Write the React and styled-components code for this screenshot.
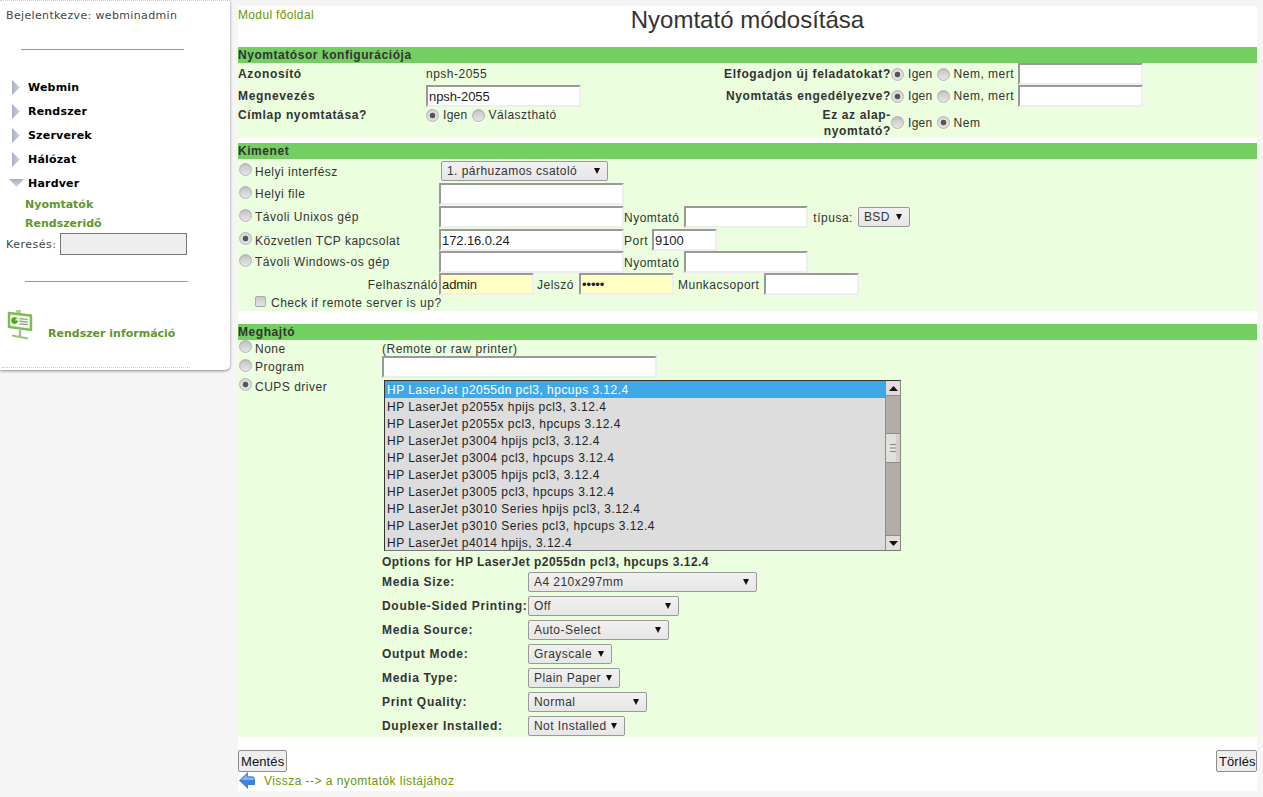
import React from "react";
import styled, { createGlobalStyle } from "styled-components";

const Global = createGlobalStyle`
  * { box-sizing: border-box; }
  html, body { margin: 0; padding: 0; height: 100%; overflow: hidden; background: #f5f5f5; }
  body { font-family: "Liberation Sans", Arial, sans-serif; font-size: 12px; color: #333; letter-spacing: .5px; }
`;

const Page = styled.div`display: flex; align-items: flex-start; height: 797px;`;

const Sidebar = styled.aside`
  width: 230px; height: 370px; flex: none; background: #fff; border-radius: 0 0 5px 0;
  border-top: 1px dotted #ccc; box-shadow: 0 1px 3px rgba(0,0,0,.45);
  font-family: "DejaVu Sans", sans-serif; font-size: 11px; color: #444; display: flex; flex-direction: column;
`;
const LoggedIn = styled.div`margin: 8px 0 0 6px; height: 14px; line-height: 14px; letter-spacing: .35px;`;
const Rule = styled.hr`
  height: 1px; border: 0; background: #999; margin: ${p => p.$top}px 0 0 ${p => p.$left}px; width: 163px; flex: none;
`;
const Menu = styled.nav`margin-top: 25px; display: flex; flex-direction: column;`;
const MenuRow = styled.div`
  height: 24px; display: flex; align-items: center; padding-left: ${p => p.$open ? 9 : 12}px;
  gap: ${p => p.$open ? 4 : 8}px; font-weight: bold; font-size: 11px; color: #000; letter-spacing: .2px;
`;
const SubItem = styled.div`
  height: 19px; line-height: 19px; margin-left: 25px; color: #5f962c; font-weight: bold; letter-spacing: 0;
`;
const SearchRow = styled.div`display: flex; align-items: center; margin: -1px 0 0 6px; height: 24px; gap: 4px; letter-spacing: .5px;`;
const SearchBox = styled.input`
  width: 127px; height: 22px; background: #eee; border: 1px solid #777; padding: 0;
`;
const InfoRow = styled.div`display: flex; align-items: flex-start; margin: 28px 0 0 7px; gap: 15px; height: 30px;`;
const InfoLink = styled.span`color: #5f962c; font-weight: bold; letter-spacing: 0; margin-top: 17px; line-height: 14px;`;
const DottedEdge = styled.div`margin: auto 0 2px 2px; width: 188px; border-bottom: 1px dotted #ccc;`;

const Main = styled.main`
  margin: 6px 0 0 8px; width: 1019px; height: 785px; background: #fff; display: flex; flex-direction: column;
`;
const TitleBar = styled.header`display: grid; grid-template-columns: 1fr auto 1fr; height: 41px;`;
const Link = styled.a`color: #669900; text-decoration: none; letter-spacing: ${p => p.$sp ?? .35}px;`;
const ModuleLink = styled(Link)`line-height: 16px; margin-top: 1px;`;
const Title = styled.h1`margin: 0; font-size: 24px; font-weight: normal; line-height: 27px; letter-spacing: 0; color: #333;`;

const Section = styled.section`margin-bottom: ${p => p.$mb ?? 0}px;`;
const SectionHead = styled.h2`
  margin: 0; height: 16px; line-height: 17px; background: #74cf62; font-size: 12px; font-weight: bold; color: #333;
  letter-spacing: .55px;
`;
const SectionBody = styled.div`background: #ebfedd; height: ${p => p.$h}px;`;

const Grid1 = styled.div`
  display: grid; grid-template-columns: 188px 277px 188px 1fr; grid-template-rows: 22px 22px 31px; align-items: center;
`;
const Strong = styled.b`font-weight: bold; letter-spacing: .65px;`;
const TopStrong = styled(Strong)`align-self: start; line-height: 16px;`;
const RightLabel = styled(Strong)`text-align: right; line-height: 16px;`;
const Choice = styled.div`
  display: flex; align-items: center; gap: 4px; height: 100%;
  ${p => p.$top && "align-self: start; height: 16px;"}
`;
const Short = styled.span`letter-spacing: .3px;`;

const Radio = styled.input.attrs({ type: "radio", readOnly: true })`
  appearance: none; margin: 0; width: 13px; height: 13px; border-radius: 50%; flex: none;
  border: 1px solid #b5b5b5;
  background: ${p => p.checked
    ? "radial-gradient(circle, #555 0 2.6px, #e3e3e3 3.2px, #d6d6d6 100%)"
    : "linear-gradient(#c4c4c4, #e6e6e6)"};
  box-shadow: inset 0 1px 1px rgba(0,0,0,.08), 0 1px 0 rgba(255,255,255,.7);
`;
const Check = styled.input.attrs({ type: "checkbox", readOnly: true })`
  appearance: none; margin: 1px 0 0; width: 11px; height: 11px; border: 1px solid #aaa; border-radius: 2px; flex: none;
  background: linear-gradient(#c9c9c9, #e4e4e4);
`;

const Field = styled.input.attrs({ type: "text", readOnly: true })`
  width: ${p => p.$w}px; height: 22px; flex: none; margin: 0; padding: 1px 1px;
  border: 2px solid; border-color: #999 #eee #eee #999;
  background: ${p => p.$yellow ? "#ffffc4" : "#fff"};
  font: 13px "Liberation Sans", Arial, sans-serif; color: #222; letter-spacing: -.1px; outline: none;
`;
const Dots = styled(Field).attrs({ type: "password" })``;

const SelectBox = styled.div`
  width: ${p => p.$w}px; height: 20px; flex: none; display: flex; align-items: center; justify-content: space-between;
  padding: 0 7px 0 5px; border: 1px solid #999; border-radius: 2px; background: linear-gradient(#f1f1f1, #e6e6e6);
  color: #333; letter-spacing: .45px; white-space: nowrap;
`;
const Arrow = () => (
  <svg width="6" height="6" viewBox="0 0 6 6"><path d="M0 0h6L3 6z" fill="#111" /></svg>
);
const Select = ({ w, children }) => (
  <SelectBox $w={w}><span>{children}</span><Arrow /></SelectBox>
);

const OutputRow = styled.div`display: flex; align-items: flex-start; height: ${p => p.$h}px;`;
const RadioCell = styled.label`
  width: ${p => p.$w ?? 201}px; flex: none; display: flex; align-items: flex-start; gap: 3px; padding-left: 1px; line-height: 16px;
  & > input { margin-top: ${p => p.$r ?? 3}px; }
  & > span { margin-top: ${p => p.$t ?? 3}px; }
`;
const Text = styled.span`
  flex: none; height: 22px; line-height: 24px; margin-left: ${p => p.$ml ?? 0}px; margin-right: ${p => p.$mr ?? 0}px;
`;
const Hint = styled.span`line-height: 16px; margin-top: 1px; height: 15px;`;
const SelectWrap = styled.div`padding: ${p => p.$t ?? 2}px 0 0 ${p => p.$l ?? 0}px;`;
const UserLabel = styled(Text)`width: 201px; text-align: right; padding-right: 1px;`;
const CheckRow = styled.label`display: flex; align-items: flex-start; gap: 5px; height: 16px; padding-left: 17px; line-height: 16px;`;

const DriverRow = styled.div`display: flex; align-items: flex-start; height: ${p => p.$h}px;`;
const ListBox = styled.div`
  margin: 2px 0 0 2px; width: 517px; height: 171px; display: flex; border: 1px solid; border-color: #333 #888 #777 #333;
  background: #ddd; font-size: 12px; letter-spacing: .47px;
`;
const ListItems = styled.ul`margin: 0; padding: 0; list-style: none; flex: 1; min-width: 0;`;
const ListItem = styled.li`
  height: 17px; line-height: 17px; padding: 1px 0 0 2px; white-space: nowrap;
  background: ${p => p.$sel ? "#3fa9e8" : "transparent"}; color: ${p => p.$sel ? "#fff" : "#222"};
`;
const ScrollBar = styled.div`
  width: 15px; flex: none; background: #b3aca7; display: flex; flex-direction: column; border-left: 1px solid #8c8c8c;
`;
const ScrollBtn = styled.div`
  height: 15px; flex: none; background: #e2ddd8; display: flex; align-items: center; justify-content: center;
  border-top: ${p => p.$down ? "1px solid #8c8c8c" : 0}; border-bottom: ${p => p.$down ? 0 : "1px solid #8c8c8c"};
`;
const ScrollGap = styled.div`flex: ${p => p.$f}; `;
const Thumb = styled.div`
  height: 30px; flex: none; background: linear-gradient(90deg, #e2e0dc 0 70%, #d2cfca 70%);
  border-top: 1px solid #8c8c8c; border-bottom: 1px solid #8c8c8c; display: flex; align-items: center; justify-content: center;
`;
const OptionsTitle = styled.b`display: block; height: 18px; line-height: 20px; margin-left: 144px; letter-spacing: .48px;`;
const OptionRow = styled.div`
  display: grid; grid-template-columns: 146px auto; justify-content: start; align-items: center; height: 24px; margin-left: 144px;
  & > b { letter-spacing: .7px; white-space: nowrap; }
`;
const Bottom = styled.div`display: flex; justify-content: space-between; margin-top: 13px; height: 22px;`;
const Btn = styled.button`
  height: 22px; padding: 0 2px; width: ${p => p.$w}px; background: #eee; border: 1px solid #8e8e8e; border-radius: 2px;
  font: 13px "Liberation Sans", Arial, sans-serif; color: #111; letter-spacing: .1px;
`;
const BackRow = styled.div`display: flex; align-items: center; gap: 9px; height: 17px; padding-left: 1px;`;

const drivers = [
  "HP LaserJet p2055dn pcl3, hpcups 3.12.4", "HP LaserJet p2055x hpijs pcl3, 3.12.4",
  "HP LaserJet p2055x pcl3, hpcups 3.12.4", "HP LaserJet p3004 hpijs pcl3, 3.12.4",
  "HP LaserJet p3004 pcl3, hpcups 3.12.4", "HP LaserJet p3005 hpijs pcl3, 3.12.4",
  "HP LaserJet p3005 pcl3, hpcups 3.12.4", "HP LaserJet p3010 Series hpijs pcl3, 3.12.4",
  "HP LaserJet p3010 Series pcl3, hpcups 3.12.4", "HP LaserJet p4014 hpijs, 3.12.4",
];
const options = [
  ["Media Size:", "A4 210x297mm", 229], ["Double-Sided Printing:", "Off", 151], ["Media Source:", "Auto-Select", 141],
  ["Output Mode:", "Grayscale", 84], ["Media Type:", "Plain Paper", 92], ["Print Quality:", "Normal", 119],
  ["Duplexer Installed:", "Not Installed", 97],
];

const TriRight = () => (
  <svg width="8" height="15" viewBox="0 0 8 15"><defs><linearGradient id="tr" x1="0" x2="1" y1="0" y2="0"><stop offset="0" stopColor="#a9adc4" /><stop offset="1" stopColor="#d5d7e2" /></linearGradient></defs><path d="M0 0l8 7.5L0 15z" fill="url(#tr)" /></svg>
);
const TriDown = () => (
  <svg width="15" height="8" viewBox="0 0 15 8"><defs><linearGradient id="td" x1="0" x2="0" y1="0" y2="1"><stop offset="0" stopColor="#a9adc4" /><stop offset="1" stopColor="#d5d7e2" /></linearGradient></defs><path d="M0 0h15L7.5 8z" fill="url(#td)" /></svg>
);
const InfoIcon = () => (
  <svg width="26" height="30" viewBox="0 0 26 30">
    <path d="M9 0h5v3H9z" fill="#b9cfa2" />
    <path d="M2 3l22 2.5v14.5L2 17z" fill="#f2f7e6" stroke="#7cbb55" strokeWidth="2.4" />
    <circle cx="7.6" cy="10.6" r="3.3" fill="#4fa12a" />
    <path d="M7.6 10.6l3.3 0a3.3 3.3 0 0 0-1-2.4z" fill="#f2f7e6" />
    <path d="M12.5 8.6l8 .9M12.5 11.2l8 .9M12.5 13.8l8 .9" stroke="#8b9a85" strokeWidth="1.2" />
    <path d="M13 20v6" stroke="#a9bba0" strokeWidth="2.4" />
    <path d="M5 25.5l16 3" stroke="#9cc47a" strokeWidth="2" />
  </svg>
);
const BackIcon = () => (
  <svg width="16" height="17" viewBox="0 0 16 17">
    <path d="M0 8.5L9 0v4.2h3.5Q16 4.2 16 8v5h-7v4z" fill="#3c82dc" />
    <path d="M2 8L8 2.5v3h5.5Q15 5.5 15 8z" fill="#86b5ee" />
  </svg>
);

export default function App() {
  return (
    <>
      <Global />
      <Page>
        <Sidebar>
          <LoggedIn>Bejelentkezve: webminadmin</LoggedIn>
          <Rule $top={26} $left={21} />
          <Menu>
            {["Webmin", "Rendszer", "Szerverek", "Hálózat"].map(m => (
              <MenuRow key={m}><TriRight />{m}</MenuRow>
            ))}
            <MenuRow $open><TriDown />Hardver</MenuRow>
          </Menu>
          <SubItem>Nyomtatók</SubItem>
          <SubItem>Rendszeridő</SubItem>
          <SearchRow>Keresés: <SearchBox /></SearchRow>
          <Rule $top={25} $left={25} />
          <InfoRow><InfoIcon /><InfoLink>Rendszer információ</InfoLink></InfoRow>
          <DottedEdge />
        </Sidebar>
        <Main>
          <TitleBar>
            <ModuleLink>Modul főoldal</ModuleLink>
            <Title>Nyomtató módosítása</Title>
            <span />
          </TitleBar>

          <Section $mb={5}>
            <SectionHead>Nyomtatósor konfigurációja</SectionHead>
            <SectionBody $h={75}>
              <Grid1>
                <Strong>Azonosító</Strong>
                <span>npsh-2055</span>
                <RightLabel>Elfogadjon új feladatokat?</RightLabel>
                <Choice><Radio checked /><Short>Igen</Short><Radio />Nem, mert<Field $w={125} /></Choice>
                <Strong>Megnevezés</Strong>
                <Field $w={155} defaultValue="npsh-2055" />
                <RightLabel>Nyomtatás engedélyezve?</RightLabel>
                <Choice><Radio checked /><Short>Igen</Short><Radio />Nem, mert<Field $w={125} /></Choice>
                <TopStrong>Címlap nyomtatása?</TopStrong>
                <Choice $top><Radio checked /><Short>Igen</Short><Radio />Választható</Choice>
                <RightLabel>Ez az alap-<br />nyomtató?</RightLabel>
                <Choice><Radio /><Short>Igen</Short><Radio checked />Nem</Choice>
              </Grid1>
            </SectionBody>
          </Section>

          <Section $mb={13}>
            <SectionHead>Kimenet</SectionHead>
            <SectionBody $h={152}>
              <OutputRow $h={24}>
                <RadioCell $r={4} $t={5}><Radio /><span>Helyi interfész</span></RadioCell>
                <SelectWrap $l={2}><Select w={167}>1. párhuzamos csatoló</Select></SelectWrap>
              </OutputRow>
              <OutputRow $h={23}>
                <RadioCell><Radio /><span>Helyi file</span></RadioCell>
                <Field $w={185} />
              </OutputRow>
              <OutputRow $h={23}>
                <RadioCell><Radio /><span>Távoli Unixos gép</span></RadioCell>
                <Field $w={185} />
                <Text $mr={5}>Nyomtató</Text>
                <Field $w={124} />
                <Text $ml={5} $mr={5}>típusa:</Text>
                <SelectWrap $t={1}><Select w={52}>BSD</Select></SelectWrap>
              </OutputRow>
              <OutputRow $h={22}>
                <RadioCell $t={4}><Radio checked /><span>Közvetlen TCP kapcsolat</span></RadioCell>
                <Field $w={185} defaultValue="172.16.0.24" />
                <Text $mr={4}>Port</Text>
                <Field $w={65} defaultValue="9100" />
              </OutputRow>
              <OutputRow $h={22}>
                <RadioCell><Radio /><span>Távoli Windows-os gép</span></RadioCell>
                <Field $w={185} />
                <Text $mr={5}>Nyomtató</Text>
                <Field $w={124} />
              </OutputRow>
              <OutputRow $h={22}>
                <UserLabel>Felhasználó</UserLabel>
                <Field $w={95} $yellow defaultValue="admin" />
                <Text $ml={3} $mr={5}>Jelszó</Text>
                <Dots $w={95} $yellow defaultValue="admin" />
                <Text $ml={4} $mr={5}>Munkacsoport</Text>
                <Field $w={95} />
              </OutputRow>
              <CheckRow><Check /><span>Check if remote server is up?</span></CheckRow>
            </SectionBody>
          </Section>

          <Section>
            <SectionHead>Meghajtó</SectionHead>
            <SectionBody $h={397}>
              <DriverRow $h={16}>
                <RadioCell $w={144} $r={0} $t={1}><Radio /><span>None</span></RadioCell>
                <Hint>(Remote or raw printer)</Hint>
              </DriverRow>
              <DriverRow $h={22}>
                <RadioCell $w={144}><Radio /><span>Program</span></RadioCell>
                <Field $w={275} />
              </DriverRow>
              <DriverRow $h={174}>
                <RadioCell $w={144} $r={0} $t={1}><Radio checked /><span>CUPS driver</span></RadioCell>
                <ListBox>
                  <ListItems>
                    {drivers.map((d, i) => <ListItem key={d} $sel={i === 0}>{d}</ListItem>)}
                  </ListItems>
                  <ScrollBar>
                    <ScrollBtn><svg width="9" height="5" viewBox="0 0 9 5"><path d="M0 5L4.5 0 9 5z" fill="#111" /></svg></ScrollBtn>
                    <ScrollGap $f={37} />
                    <Thumb><svg width="6" height="8" viewBox="0 0 6 8"><path d="M0 .5h6M0 4h6M0 7.5h6" stroke="#888" /></svg></Thumb>
                    <ScrollGap $f={73} />
                    <ScrollBtn $down><svg width="9" height="5" viewBox="0 0 9 5"><path d="M0 0L4.5 5 9 0z" fill="#111" /></svg></ScrollBtn>
                  </ScrollBar>
                </ListBox>
              </DriverRow>
              <OptionsTitle>Options for HP LaserJet p2055dn pcl3, hpcups 3.12.4</OptionsTitle>
              {options.map(([label, val, w]) => (
                <OptionRow key={label}><Strong>{label}</Strong><Select w={w}>{val}</Select></OptionRow>
              ))}
            </SectionBody>
          </Section>

          <Bottom><Btn $w={49}>Mentés</Btn><Btn $w={41}>Törlés</Btn></Bottom>
          <BackRow><BackIcon /><Link $sp={.45}>Vissza --&gt; a nyomtatók listájához</Link></BackRow>
        </Main>
      </Page>
    </>
  );
}
